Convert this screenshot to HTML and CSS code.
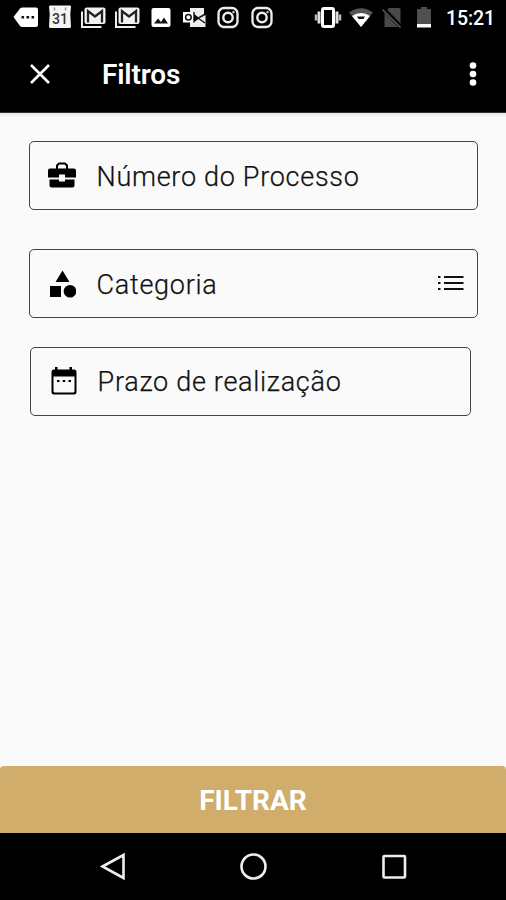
FILE: index.html
```html
<!DOCTYPE html>
<html lang="pt-BR">
<head>
<meta charset="utf-8">
<title>Filtros</title>
<link rel="stylesheet" href="styles.css">
</head>
<body>
<div class="screen">
  <div class="status">
    <div class="notifications">
      <svg viewBox="0 0 28 28"><path d="M1.5 13 8 4.500Q9 3.500 10.500 3.500H24Q26 3.500 26 5.500V21Q26 23 24 23H10.500Q9 23 8 22Z" fill="#fff"/><path d="M9.500 12h2.600v2.600H9.500zM14.500 12h2.600v2.600h-2.600zM19.500 12h2.600v2.600h-2.600z" fill="#111"/></svg>
      <svg viewBox="0 0 28 28"><path d="M4 1.500H24Q25.300 1.500 25 3L24.300 10 25 22.500Q25 24 23.500 24H4.500Q3 24 3 22.500L3.700 10 3 3Q3 1.500 4 1.500Z" fill="#f4f4f4"/><path d="M8.500 3.500v3M19.500 3.500v3" stroke="#999" stroke-width="1.500"/><text x="14" y="19.500" text-anchor="middle" class="day">31</text></svg>
      <svg viewBox="0 0 28 28"><use href="#mail"/></svg>
      <svg viewBox="0 0 28 28"><use href="#mail"/></svg>
      <svg viewBox="0 0 28 28"><rect x="4.500" y="4" width="19" height="19" rx="2" fill="#fff"/><path d="M7 19.500 11 14.500 14 18 17 13.500 21 19.500Z" fill="#111"/></svg>
      <svg viewBox="0 0 28 28"><path d="M10 4H24V11L19 14 14 10H10ZM20 14 25.500 11V23H10V18H14Z" fill="#eee"/><rect x="3" y="8" width="11" height="10.500" fill="#fff"/><circle cx="8.400" cy="13.200" r="2.800" fill="none" stroke="#111" stroke-width="1.500"/><path d="M14 8V18.500M14 17 18 14 25 19M14 11 18 14 25 10" fill="none" stroke="#111" stroke-width="1.400"/></svg>
      <svg viewBox="0 0 28 28"><use href="#camera"/></svg>
      <svg viewBox="0 0 28 28"><use href="#camera"/></svg>
    </div>
    <div class="system">
      <svg viewBox="0 0 28 28"><rect x="8.500" y="4.500" width="11" height="18" rx="1.500" fill="none" stroke="#fff" stroke-width="3"/><path d="M5 7.500v12M23 7.500v12" stroke="#ddd" stroke-width="3"/><path d="M2 10.500v6M26 10.500v6" stroke="#bbb" stroke-width="2.500"/></svg>
      <svg class="wifi" viewBox="0 0 28 28"><path d="M2 8.500Q14 0 26 8.500L14 23Z" fill="#555"/><path d="M5 12Q14 6 23 12L14 23Z" fill="#fff"/><path d="M10 12.500h8L16.500 15h-5z" fill="#111"/></svg>
      <svg viewBox="0 0 28 28"><path d="M11 4H21Q22.500 4 22.500 5.500V23H6.500V8Z" fill="#484848"/><path d="M5.500 5 23.500 23.500" stroke="#000" stroke-width="4"/><path d="M4.500 5.500 22.500 23.500" stroke="#555" stroke-width="1.700"/></svg>
      <svg viewBox="0 0 28 28"><path d="M11 3h6v2h4v18H7V5h4z" fill="#505050"/><path d="M7 20h14v3.500H7z" fill="#fff"/></svg>
      <span class="time">15:21</span>
    </div>
  </div>
  <header class="bar">
    <svg class="close" viewBox="0 0 22 22"><path d="M2 2 20 20M20 2 2 20" stroke="#fff" stroke-width="2.600"/></svg>
    <h1>Filtros</h1>
    <svg class="more" viewBox="0 0 8 24" fill="#fff"><circle cx="4" cy="3.500" r="3.300"/><circle cx="4" cy="12" r="3.300"/><circle cx="4" cy="20.500" r="3.300"/></svg>
  </header>
  <main>
    <div class="field number">
      <svg class="icon" viewBox="0 0 28 28"><path d="M9 7V3.500L11 1.500H17L19 3.500V7" fill="none" stroke="#000" stroke-width="2"/><path d="M2 6.500H26Q28 6.500 28 8.500V15.500H17V12.500H11V15.500H0V8.500Q0 6.500 2 6.500ZM1.500 17.500H11V19.500H17V17.500H26.500V23.500Q26.500 25.500 24.500 25.500H3.500Q1.500 25.500 1.500 23.500Z"/></svg>
      <span>Número do Processo</span>
    </div>
    <div class="field category">
      <svg class="icon" viewBox="0 0 28 28"><path d="M14.500 0.500 21.500 12H7.500ZM2 16H13V27H2Z"/><circle cx="22" cy="21.300" r="6.300"/></svg>
      <span>Categoria</span>
      <svg class="list" viewBox="0 0 26 16"><path d="M0 2h2.500M0 8h2.500M0 14h2.500M6 2h19.500M6 8h19.500M6 14h19.500" stroke="#111" stroke-width="2.200"/></svg>
    </div>
    <div class="field due">
      <svg class="icon" viewBox="0 0 28 28"><path d="M6 0h2.500V2.500H20.500V0H23V2.500H25Q27.500 2.500 27.500 5V25Q27.500 27.500 25 27.500H5Q2.500 27.500 2.500 25V5Q2.500 2.500 5 2.500H6ZM4.500 9.500V24Q4.500 25.500 6 25.500H24Q25.500 25.500 25.500 24V9.500Z" fill-rule="evenodd"/><path d="M8 13h2.500v2H8zM13.700 13h2.500v2h-2.500zM19.500 13H22v2h-2.500z"/></svg>
      <span>Prazo de realização</span>
    </div>
  </main>
  <button class="submit">FILTRAR</button>
  <nav>
    <svg viewBox="0 0 30 30"><path d="M3.500 15.500 24.500 4V27Z"/></svg>
    <svg viewBox="0 0 30 30"><circle cx="14.500" cy="15.500" r="12"/></svg>
    <svg viewBox="0 0 30 30"><rect x="4.500" y="5" width="21.500" height="21.500" rx="1"/></svg>
  </nav>
</div>
<svg class="defs">
  <defs>
    <g id="mail"><path d="M3 7.500V23H22.500" fill="none" stroke="#eee" stroke-width="2"/><rect x="5.500" y="3.500" width="21" height="16.500" rx="2" fill="#f2f2f2"/><path d="M9 18.500V7L16 12.500 23 7V18.500" fill="none" stroke="#222" stroke-width="2.300"/></g>
    <g id="camera" fill="none" stroke="#eee"><rect x="4.500" y="4" width="19" height="19" rx="5.500" stroke-width="2.300"/><circle cx="14" cy="13.500" r="4.700" stroke-width="2.400"/><path d="M18.500 8.200h2" stroke-width="2"/></g>
  </defs>
</svg>
</body>
</html>
```

FILE: styles.css
```css
* { box-sizing: border-box; }
body { margin: 0; font-family: Roboto, sans-serif; background: #fafafa; }
.defs { position: absolute; width: 0; height: 0; }
.screen { width: 506px; height: 900px; display: flex; flex-direction: column; overflow: hidden; }
svg { display: block; flex: none; }
.status { height: 36px; background: #000; display: flex; justify-content: space-between; padding: 4px 11px 4px 12px; }
.notifications { display: flex; gap: 5.7px; }
.notifications svg, .system svg { width: 28px; height: 28px; }
.day { font: 500 14px Roboto, sans-serif; fill: #333; }
.system { display: flex; gap: 4px; align-items: center; }
.system .wifi { margin: 0 -1px 0 1px; }
.time { margin-left: 4px; width: 49px; padding-top: 1px; color: #fff; font-size: 19.5px; font-weight: 500; line-height: 28px; white-space: nowrap; letter-spacing: -.1px; }
.bar { height: 77px; background: #000; color: #fff; display: flex; align-items: center; padding: 0 29px; border-bottom: 1px solid #333; }
.close { width: 22px; height: 22px; margin-top: -1px; }
h1 { flex: 1; margin: 2px 0 0 51px; font-size: 28px; line-height: 36px; font-weight: 600; letter-spacing: -.15px; }
.more { width: 8px; height: 24px; margin-top: -1px; }
main { flex: 1; padding: 28px 28px 0 29px; background: linear-gradient(#e8e8e8, #fafafa 5px); }
.field { height: 69px; border: 1px solid #444; border-radius: 5px; display: flex; align-items: center; padding-left: 18px; color: #111; font-size: 27px; font-weight: 300; letter-spacing: .71px; -webkit-text-stroke: .25px #111; }
.field span { margin-left: 20.6px; line-height: 36px; white-space: nowrap; padding-top: 2px; }
.icon { width: 28px; height: 28px; fill: #000; }
.category { margin-top: 39px; }
.due { margin: 28.5px 7px 0 1px; }
.list { width: 26px; height: 16px; margin: -1px 13px 0 auto; }
.submit { height: 67px; border: 0; border-radius: 4px 4px 0 0; background: #d0ad6b; color: #fff; font: 700 28px/36px Roboto, sans-serif; padding: 2px 0 0; }
nav { height: 67px; background: #000; display: flex; justify-content: space-between; padding: 18px 97px 0 99px; }
nav svg { width: 30px; height: 30px; fill: none; stroke: #eee; stroke-width: 2.6; }
```
